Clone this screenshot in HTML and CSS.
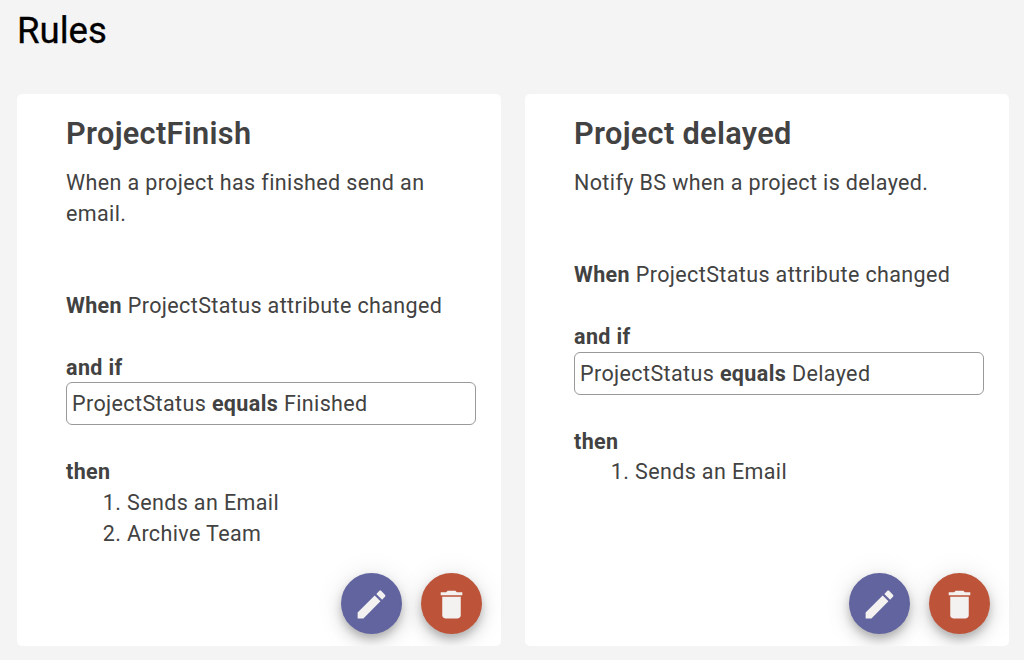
FILE: index.html
```
<!DOCTYPE html>
<html lang="en">
<head>
    <meta charset="UTF-8">
    <meta name="viewport" content="width=device-width, initial-scale=1.0">
    <title>Rules</title>
    <link rel="stylesheet" href="styles.css">
</head>
<body>
    <h1>Rules</h1>

    <div class="rules">
        <!-- ProjectFinish -->
        <div class="card">
            <h2>ProjectFinish</h2>
            <p class="description">When a project has finished send an email.</p>
            <p class="trigger"><strong>When</strong> ProjectStatus attribute changed</p>
            <strong>and if</strong>
            <div class="condition">ProjectStatus <strong>equals</strong> Finished</div>
            <strong>then</strong>
            <ol>
                <li>Sends an Email</li>
                <li>Archive Team</li>
            </ol>
            <div class="actions">
                <button class="fab edit" aria-label="Edit">
                    <svg viewBox="0 0 24 24"><path d="M3 17.25V21h3.75L17.81 9.94l-3.75-3.75L3 17.25zM20.71 7.04c.39-.39.39-1.02 0-1.41l-2.34-2.34c-.39-.39-1.02-.39-1.41 0l-1.83 1.83 3.75 3.75 1.83-1.83z"/></svg>
                </button>
                <button class="fab delete" aria-label="Delete">
                    <svg viewBox="0 0 24 24"><path d="M6 19c0 1.1.9 2 2 2h8c1.1 0 2-.9 2-2V7H6v12zM19 4h-3.5l-1-1h-5l-1 1H5v2h14V4z"/></svg>
                </button>
            </div>
        </div>

        <!-- Project delayed -->
        <div class="card">
            <h2>Project delayed</h2>
            <p class="description">Notify BS when a project is delayed.</p>
            <p class="trigger"><strong>When</strong> ProjectStatus attribute changed</p>
            <strong>and if</strong>
            <div class="condition">ProjectStatus <strong>equals</strong> Delayed</div>
            <strong>then</strong>
            <ol>
                <li>Sends an Email</li>
            </ol>
            <div class="actions">
                <button class="fab edit" aria-label="Edit">
                    <svg viewBox="0 0 24 24"><path d="M3 17.25V21h3.75L17.81 9.94l-3.75-3.75L3 17.25zM20.71 7.04c.39-.39.39-1.02 0-1.41l-2.34-2.34c-.39-.39-1.02-.39-1.41 0l-1.83 1.83 3.75 3.75 1.83-1.83z"/></svg>
                </button>
                <button class="fab delete" aria-label="Delete">
                    <svg viewBox="0 0 24 24"><path d="M6 19c0 1.1.9 2 2 2h8c1.1 0 2-.9 2-2V7H6v12zM19 4h-3.5l-1-1h-5l-1 1H5v2h14V4z"/></svg>
                </button>
            </div>
        </div>
    </div>
</body>
</html>
```
FILE: styles.css
```
* {
    box-sizing: border-box;
}

body {
    margin: 0;
    padding: 0 15.5px 0 17px;
    background-color: #f4f4f4;
    color: #424242;
    font-family: Roboto, sans-serif;
    font-size: 21.5px;
    line-height: 30.7px;
    letter-spacing: 0.38px;
}

h1 {
    margin: 0;
    height: 94px;
    padding-top: 9px;
    color: #000;
    font-size: 36.6px;
    font-weight: 400;
    line-height: 44px;
    letter-spacing: 0;
    -webkit-text-stroke: 0.3px #000;
}

.rules {
    display: grid;
    grid-template-columns: 1fr 1fr;
    gap: 24.5px;
}

.card {
    display: flex;
    flex-direction: column;
    height: 552px;
    padding: 20px 25px 12px 49px;
    background-color: #fff;
    border-radius: 5px;
}

h2 {
    margin: 0 0 14.4px;
    font-size: 30.7px;
    font-weight: 600;
    line-height: 40px;
    letter-spacing: 0.32px;
}

strong {
    font-weight: 700;
    letter-spacing: 0.38px;
}

.description {
    margin: 0 0 61.4px;
}

.trigger {
    margin: 0 0 30.7px;
}

.condition {
    height: 43px;
    margin: -1px 0 32px;
    padding: 6px 5px 4px;
    border: 1px solid #999;
    border-radius: 6px;
}

ol {
    margin: 0;
    padding-left: 61px;
}

.actions {
    display: flex;
    justify-content: flex-end;
    gap: 18.5px;
    margin: auto -6.5px 0 0;
}

.fab {
    display: flex;
    align-items: center;
    justify-content: center;
    width: 61.5px;
    height: 61.5px;
    padding: 0;
    border: none;
    border-radius: 50%;
    box-shadow: 0 5px 8px -1px rgba(0, 0, 0, 0.2), 0 8px 16px rgba(0, 0, 0, 0.12), 0 2px 28px rgba(0, 0, 0, 0.1);
    cursor: pointer;
}

.fab svg {
    width: 37px;
    height: 37px;
    margin-top: 2px;
    fill: #f3f2f1;
}

.edit {
    background-color: #6264a0;
}

.delete {
    background-color: #bd543a;
}
```
